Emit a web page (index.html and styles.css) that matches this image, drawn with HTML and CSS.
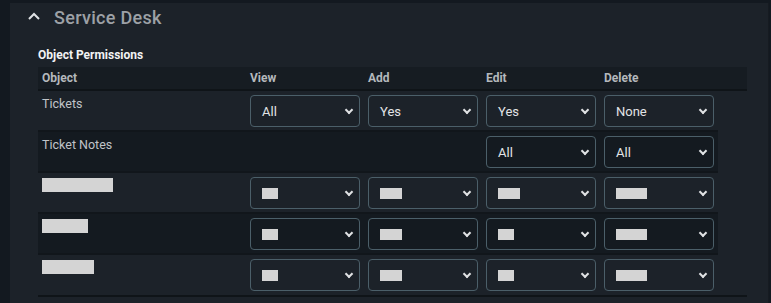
FILE: index.html
```html
<!DOCTYPE html>
<html lang="en">
<head>
  <meta charset="UTF-8" />
  <title>Service Desk Permissions</title>
  <link rel="stylesheet" href="styles.css">
</head>
<body>
  <div class="panel">
    <div class="panel-head">
      <svg class="collapse" width="12" height="8" viewBox="0 0 12 8"><path d="M1 7 L6 2 L11 7" fill="none" stroke="#dfe2e5" stroke-width="2"/></svg>
      <span class="panel-title">Service Desk</span>
    </div>
    <div class="section">
      <div class="section-title">Object Permissions</div>
      <div class="perm-wrap">
        <table class="perm-table">
          <colgroup>
            <col class="c-obj"><col class="c-perm"><col class="c-perm"><col class="c-perm"><col class="c-perm"><col class="c-pad">
          </colgroup>
          <thead>
            <tr><th>Object</th><th>View</th><th>Add</th><th>Edit</th><th>Delete</th><th></th></tr>
          </thead>
          <tbody>
            <tr>
              <td class="obj">Tickets</td>
              <td><div class="sel">All<span class="chev"></span></div></td>
              <td><div class="sel">Yes<span class="chev"></span></div></td>
              <td><div class="sel">Yes<span class="chev"></span></div></td>
              <td><div class="sel">None<span class="chev"></span></div></td>
            </tr>
            <tr class="alt">
              <td class="obj">Ticket Notes</td>
              <td></td>
              <td></td>
              <td><div class="sel">All<span class="chev"></span></div></td>
              <td><div class="sel">All<span class="chev"></span></div></td>
            </tr>
            <tr>
              <td class="obj"><span class="blank" style="width:71px"></span></td>
              <td><div class="sel"><span class="blank sm" style="width:16px"></span><span class="chev"></span></div></td>
              <td><div class="sel"><span class="blank sm" style="width:22px"></span><span class="chev"></span></div></td>
              <td><div class="sel"><span class="blank sm" style="width:22px"></span><span class="chev"></span></div></td>
              <td><div class="sel"><span class="blank sm" style="width:31px"></span><span class="chev"></span></div></td>
            </tr>
            <tr class="alt">
              <td class="obj"><span class="blank" style="width:46px"></span></td>
              <td><div class="sel"><span class="blank sm" style="width:16px"></span><span class="chev"></span></div></td>
              <td><div class="sel"><span class="blank sm" style="width:22px"></span><span class="chev"></span></div></td>
              <td><div class="sel"><span class="blank sm" style="width:16px"></span><span class="chev"></span></div></td>
              <td><div class="sel"><span class="blank sm" style="width:31px"></span><span class="chev"></span></div></td>
            </tr>
            <tr>
              <td class="obj"><span class="blank" style="width:52px"></span></td>
              <td><div class="sel"><span class="blank sm" style="width:16px"></span><span class="chev"></span></div></td>
              <td><div class="sel"><span class="blank sm" style="width:22px"></span><span class="chev"></span></div></td>
              <td><div class="sel"><span class="blank sm" style="width:16px"></span><span class="chev"></span></div></td>
              <td><div class="sel"><span class="blank sm" style="width:31px"></span><span class="chev"></span></div></td>
            </tr>
          </tbody>
        </table>
      </div>
    </div>
  </div>
</body>
</html>
```

FILE: styles.css
```css
* {
  box-sizing: border-box;
}
body {
  margin: 0;
  padding: 3px 0 0 10px;
  background: #131920;
  font-family: 'Roboto', 'Liberation Sans', sans-serif;
  color: #c4c8cc;
  height: 303px;
  overflow: hidden;
}
.panel {
  background: #1c2229;
  width: 759px;
  height: 300px;
  border-right: 1px solid #161b21;
}
.panel-head {
  display: flex;
  align-items: center;
  height: 28px;
  padding-left: 18px;
}
.collapse {
  margin-right: 14px;
  margin-top: -2px;
}
.panel-title {
  font-size: 18px;
  font-weight: 500;
  color: #9da1a6;
  letter-spacing: 0.3px;
}
.section {
  padding: 17px 0 0 28px;
}
.section-title {
  font-size: 12px;
  font-weight: 700;
  color: #f2f3f4;
  height: 19px;
}
.perm-wrap {
  width: 709px;
  border-bottom: 2px solid #0f1418;
}
.perm-table {
  width: 709px;
  border-collapse: collapse;
  table-layout: fixed;
}
.c-obj { width: 208px; }
.c-perm { width: 118px; }
.c-pad { width: 29px; }
.perm-table th {
  background: #161c22;
  height: 23px;
  padding: 0 4px;
  text-align: left;
  font-size: 12px;
  font-weight: 700;
  color: #b4b8bc;
  border-bottom: 2px solid #0f1418;
}
.perm-table td {
  height: 41px;
  padding: 4px 4px 0;
  vertical-align: top;
  border-bottom: 2px solid #11161b;
}
.perm-table tr:last-child td {
  border-bottom: none;
}
.perm-table tr.alt td {
  background: #141a20;
}
.perm-table td.obj {
  font-size: 12.5px;
  padding-top: 5px;
  color: #c0c4c8;
}
.sel {
  position: relative;
  height: 32px;
  width: 110px;
  border: 1px solid #4b5f69;
  border-radius: 4px;
  padding-left: 11px;
  display: flex;
  align-items: center;
  font-size: 13px;
  color: #e2e4e6;
}
.chev {
  position: absolute;
  right: 7px;
  top: 11px;
  width: 6px;
  height: 6px;
  border-right: 2px solid #e0e2e4;
  border-bottom: 2px solid #e0e2e4;
  transform: rotate(45deg);
}
.blank {
  display: inline-block;
  height: 14px;
  background: #d4d4d4;
  margin-top: 0;
}
.blank.sm {
  height: 11px;
  margin-top: 0;
}
```
